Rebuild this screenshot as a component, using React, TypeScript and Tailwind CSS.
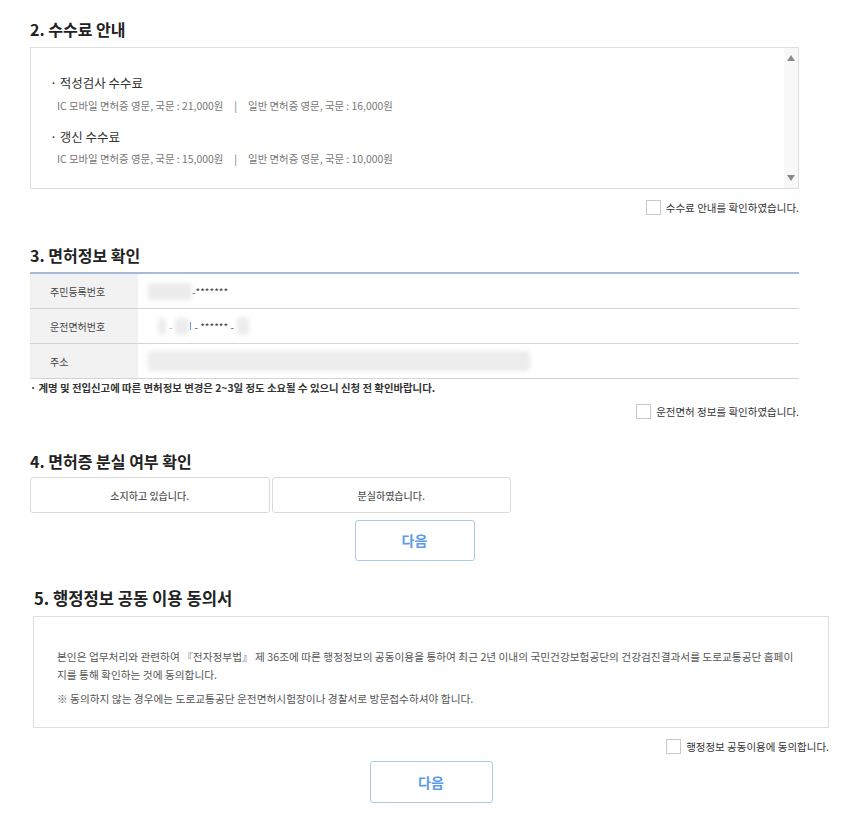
import React from "react";

const font = { fontFamily: '"Noto Sans CJK KR", "Noto Sans", sans-serif' };

function Check({ label }: { label: string }) {
  return (
    <div className="flex items-center justify-end gap-[5px]">
      <span className="block h-[15px] w-[15px] border border-[#c9c9c9] bg-white" />
      <span className="text-[10.5px] leading-[15px] text-[#333]">{label}</span>
    </div>
  );
}

function Blur({ w, h = 17, cls = "" }: { w: number; h?: number; cls?: string }) {
  return (
    <span
      className={"inline-block rounded-sm bg-[#ececec] blur-[2px] " + cls}
      style={{ width: w, height: h }}
    />
  );
}

export default function App() {
  return (
    <div className="min-h-[821px] w-[843px] bg-white text-[#333]" style={font}>
      <div className="ml-[30px] w-[769px] pt-[19px]">
        {/* Section 2 */}
        <h2 className="text-[16px] font-semibold leading-[20px] text-[#222]">2. 수수료 안내</h2>
        <div className="mt-[8px] flex h-[142px] border border-[#dedede]">
          <div className="flex-1 pl-[19px] pt-[26px]">
            <p className="text-[12.5px] leading-[18px] text-[#333]">· 적성검사 수수료</p>
            <p className="mt-[7px] pl-[7px] text-[10.4px] leading-[14px] text-[#777]">
              IC 모바일 면허증 영문, 국문 : 21,000원<span className="mx-[11px]">|</span>일반 면허증 영문, 국문 : 16,000원
            </p>
            <p className="mt-[15px] text-[12.5px] leading-[18px] text-[#333]">· 갱신 수수료</p>
            <p className="mt-[6px] pl-[7px] text-[10.4px] leading-[14px] text-[#777]">
              IC 모바일 면허증 영문, 국문 : 15,000원<span className="mx-[11px]">|</span>일반 면허증 영문, 국문 : 10,000원
            </p>
          </div>
          <div className="flex w-[14px] flex-col items-center justify-between bg-[#f8f8f8] py-[7px]">
            <svg width="8" height="6" viewBox="0 0 8 6"><path d="M4 0 L8 6 L0 6 Z" fill="#8a8a8a" /></svg>
            <svg width="8" height="6" viewBox="0 0 8 6"><path d="M0 0 L8 0 L4 6 Z" fill="#8a8a8a" /></svg>
          </div>
        </div>
        <div className="mt-[11px]">
          <Check label="수수료 안내를 확인하였습니다." />
        </div>

        {/* Section 3 */}
        <h2 className="mt-[30px] text-[16px] font-semibold leading-[20px] text-[#222]">3. 면허정보 확인</h2>
        <div className="mt-[7px] border-t-2 border-[#a7b9dc]">
          <div className="flex h-[35px] border-b border-[#d4d4d4]">
            <div className="flex w-[108px] items-center bg-[#f2f2f2] pl-[20px] text-[10px] text-[#444]">주민등록번호</div>
            <div className="flex items-center pl-[10px] text-[10px] text-[#444]">
              <Blur w={44} />
              <span>-*******</span>
            </div>
          </div>
          <div className="flex h-[35px] border-b border-[#d4d4d4]">
            <div className="flex w-[108px] items-center bg-[#f2f2f2] pl-[20px] text-[10px] text-[#444]">운전면허번호</div>
            <div className="flex items-center pl-[20px] text-[10px] text-[#444]">
              <Blur w={8} />
              <span className="mx-[3px] text-[#aaa]">-</span>
              <Blur w={14} />
              <span className="ml-[1px] inline-block h-[8px] w-[1px] bg-[#4a7fe0]" />
              <span className="ml-[3px]">- ****** -</span>
              <Blur w={12} h={18} cls="ml-[3px]" />
            </div>
          </div>
          <div className="flex h-[35px] border-b border-[#d4d4d4]">
            <div className="flex w-[108px] items-center bg-[#f2f2f2] pl-[20px] text-[10px] text-[#444]">주소</div>
            <div className="flex items-center pl-[10px]">
              <Blur w={382} h={20} />
            </div>
          </div>
        </div>
        <p className="mt-[1px] text-[10.4px] font-bold leading-[16px] text-[#333]">
          · 계명 및 전입신고에 따른 면허정보 변경은 2~3일 정도 소요될 수 있으니 신청 전 확인바랍니다.
        </p>
        <div className="mt-[8px]">
          <Check label="운전면허 정보를 확인하였습니다." />
        </div>

        {/* Section 4 */}
        <h2 className="mt-[32px] text-[16px] font-semibold leading-[20px] text-[#222]">4. 면허증 분실 여부 확인</h2>
        <div className="mt-[6px] flex w-[481px] gap-[2px]">
          <button className="flex h-[36px] flex-1 items-center justify-center rounded-[3px] border border-[#d9d9d9] bg-white text-[10px] font-medium text-[#555]">
            소지하고 있습니다.
          </button>
          <button className="flex h-[36px] flex-1 items-center justify-center rounded-[3px] border border-[#d9d9d9] bg-white text-[10px] font-medium text-[#555]">
            분실하였습니다.
          </button>
        </div>
        <div className="mt-[7px] flex justify-center">
          <button className="h-[41px] w-[120px] rounded-[3px] border border-[#a9c9f2] bg-white text-[14px] font-bold text-[#5c9be6]">
            다음
          </button>
        </div>
      </div>

      {/* Section 5 */}
      <div className="ml-[33px] w-[796px] pt-[27px] pb-[17px]">
        <h2 className="pl-[1px] text-[16.6px] font-semibold leading-[20px] text-[#222]">5. 행정정보 공동 이용 동의서</h2>
        <div className="mt-[8px] h-[112px] border border-[#dedede] pl-[23px] pt-[31px] text-[10.7px] leading-[18px] text-[#555]">
          <p className="whitespace-nowrap">
            본인은 업무처리와 관련하여 『전자정부법』 제 36조에 따른 행정정보의 공동이용을 통하여 최근 2년 이내의 국민건강보험공단의 건강검진결과서를 도로교통공단 홈페이
            <br />
            지를 통해 확인하는 것에 동의합니다.
          </p>
          <p className="mt-[6px] whitespace-nowrap">※ 동의하지 않는 경우에는 도로교통공단 운전면허시험장이나 경찰서로 방문접수하셔야 합니다.</p>
        </div>
        <div className="mt-[11px]">
          <Check label="행정정보 공동이용에 동의합니다." />
        </div>
        <div className="mt-[7px] flex justify-center">
          <button className="h-[42px] w-[123px] rounded-[3px] border border-[#a9c9f2] bg-white text-[14px] font-bold text-[#5c9be6]">
            다음
          </button>
        </div>
      </div>
    </div>
  );
}
